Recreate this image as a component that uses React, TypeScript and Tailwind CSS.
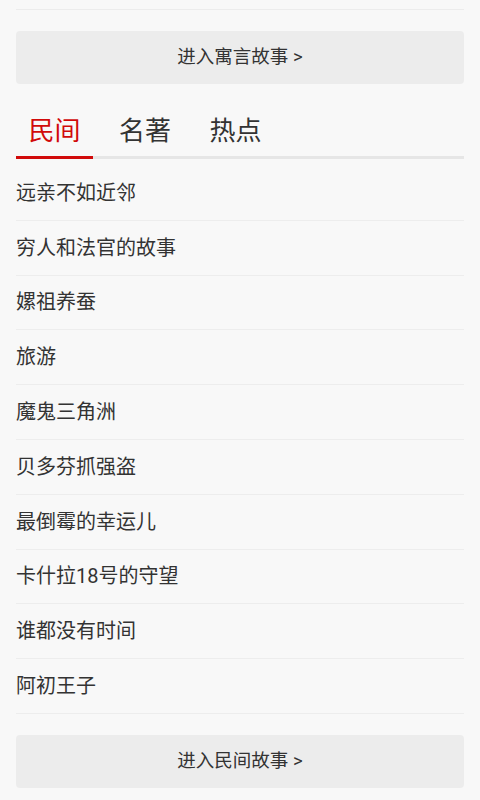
import { useState } from 'react'

const STORIES = [
  '远亲不如近邻',
  '穷人和法官的故事',
  '嫘祖养蚕',
  '旅游',
  '魔鬼三角洲',
  '贝多芬抓强盗',
  '最倒霉的幸运儿',
  '卡什拉18号的守望',
  '谁都没有时间',
  '阿初王子',
]

const TABS = ['民间', '名著', '热点']

function EnterButton({ label }: { label: string }) {
  return (
    <button className="flex h-[53px] w-full items-center justify-center rounded bg-[#ececec] text-[18.5px] text-[#333]">
      {label} &gt;
    </button>
  )
}

export default function App() {
  const [active, setActive] = useState(0)

  return (
    <div
      className="min-h-[800px] bg-[#f8f8f8] px-4"
      style={{ fontFamily: 'Roboto, "Noto Sans CJK SC", sans-serif' }}
    >
      <div className="pt-[9px]">
        <div className="h-px bg-[#ececec]" />
      </div>

      <div className="mt-[21px]">
        <EnterButton label="进入寓言故事" />
      </div>

      {/* tabs */}
      <div className="mt-5 flex gap-[13.5px] border-b-[3px] border-[#e6e6e6]">
        {TABS.map((t, i) => (
          <button
            key={t}
            onClick={() => setActive(i)}
            className={`-mb-[3px] flex h-[55px] w-[77px] items-center justify-center border-b-[3px] pt-[2px] text-[26px] ${
              i === active ? 'border-[#d10a0a] text-[#d10a0a]' : 'border-transparent text-[#333]'
            }`}
          >
            {t}
          </button>
        ))}
      </div>

      {/* story list */}
      <ul className="mt-[7px]">
        {STORIES.map(s => (
          <li
            key={s}
            className="flex h-[54.8px] items-center border-b border-[#ededed] text-[20px] text-[#333]"
          >
            {s}
          </li>
        ))}
      </ul>

      <div className="mt-[21px]">
        <EnterButton label="进入民间故事" />
      </div>
    </div>
  )
}
